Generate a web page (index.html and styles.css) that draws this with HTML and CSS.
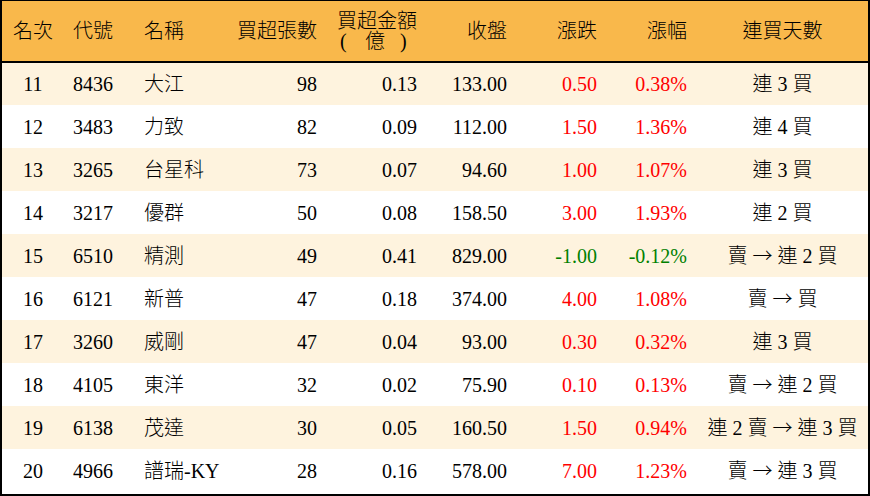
FILE: index.html
```html
<!DOCTYPE html>
<html lang="zh-Hant">
<head>
<meta charset="utf-8">
<title>買超排行</title>
<link rel="stylesheet" href="styles.css">
</head>
<body>
<div class="frame">
<table class="rank">
<colgroup>
<col class="w1"><col class="w2"><col class="w3"><col class="w4"><col class="w5"><col class="w6"><col class="w7"><col class="w8"><col class="w9">
</colgroup>
<thead>
<tr>
<th class="c">名次</th>
<th class="l">代號</th>
<th class="l">名稱</th>
<th class="r">買超張數</th>
<th class="r">買超金額<br><span class="pl">(</span>億<span class="pr">)</span></th>
<th class="r">收盤</th>
<th class="r">漲跌</th>
<th class="r">漲幅</th>
<th class="c">連買天數</th>
</tr>
</thead>
<tbody>
<tr><td class="c">11</td><td class="l">8436</td><td class="l">大江</td><td class="r">98</td><td class="r">0.13</td><td class="r">133.00</td><td class="r up">0.50</td><td class="r up">0.38%</td><td class="c">連 3 買</td></tr>
<tr><td class="c">12</td><td class="l">3483</td><td class="l">力致</td><td class="r">82</td><td class="r">0.09</td><td class="r">112.00</td><td class="r up">1.50</td><td class="r up">1.36%</td><td class="c">連 4 買</td></tr>
<tr><td class="c">13</td><td class="l">3265</td><td class="l">台星科</td><td class="r">73</td><td class="r">0.07</td><td class="r">94.60</td><td class="r up">1.00</td><td class="r up">1.07%</td><td class="c">連 3 買</td></tr>
<tr><td class="c">14</td><td class="l">3217</td><td class="l">優群</td><td class="r">50</td><td class="r">0.08</td><td class="r">158.50</td><td class="r up">3.00</td><td class="r up">1.93%</td><td class="c">連 2 買</td></tr>
<tr><td class="c">15</td><td class="l">6510</td><td class="l">精測</td><td class="r">49</td><td class="r">0.41</td><td class="r">829.00</td><td class="r down">-1.00</td><td class="r down">-0.12%</td><td class="c">賣 <span class="ar">→</span> 連 2 買</td></tr>
<tr><td class="c">16</td><td class="l">6121</td><td class="l">新普</td><td class="r">47</td><td class="r">0.18</td><td class="r">374.00</td><td class="r up">4.00</td><td class="r up">1.08%</td><td class="c">賣 <span class="ar">→</span> 買</td></tr>
<tr><td class="c">17</td><td class="l">3260</td><td class="l">威剛</td><td class="r">47</td><td class="r">0.04</td><td class="r">93.00</td><td class="r up">0.30</td><td class="r up">0.32%</td><td class="c">連 3 買</td></tr>
<tr><td class="c">18</td><td class="l">4105</td><td class="l">東洋</td><td class="r">32</td><td class="r">0.02</td><td class="r">75.90</td><td class="r up">0.10</td><td class="r up">0.13%</td><td class="c">賣 <span class="ar">→</span> 連 2 買</td></tr>
<tr><td class="c">19</td><td class="l">6138</td><td class="l">茂達</td><td class="r">30</td><td class="r">0.05</td><td class="r">160.50</td><td class="r up">1.50</td><td class="r up">0.94%</td><td class="c">連 2 賣 <span class="ar">→</span> 連 3 買</td></tr>
<tr><td class="c">20</td><td class="l">4966</td><td class="l">譜瑞-KY</td><td class="r">28</td><td class="r">0.16</td><td class="r">578.00</td><td class="r up">7.00</td><td class="r up">1.23%</td><td class="c">賣 <span class="ar">→</span> 連 3 買</td></tr>
</tbody>
</table>
</div>
</body>
</html>
```

FILE: styles.css
```css
html, body {
  margin: 0;
  padding: 0;
  background: #ffffff;
}
.frame {
  width: 870px;
  height: 496px;
  box-sizing: border-box;
  border-top: 1px solid #000;
  border-left: 2px solid #000;
  border-right: 2px solid #000;
  border-bottom: 2px solid #000;
  overflow: hidden;
}
.rank {
  width: 866px;
  border-collapse: collapse;
  table-layout: fixed;
  font-family: "Liberation Serif", "Noto Sans CJK TC", serif;
  font-size: 20px;
  font-weight: 300;
  color: #000;
}
.w1 { width: 62px; }
.w2 { width: 71px; }
.w3 { width: 90px; }
.w4 { width: 102px; }
.w5 { width: 100px; }
.w6 { width: 90px; }
.w7 { width: 90px; }
.w8 { width: 90px; }
.w9 { width: 171px; }
.rank thead tr {
  height: 61px;
  background: #f9b84b;
  border-bottom: 2px solid #000;
}
.rank th {
  font-weight: 300;
  line-height: 20px;
  padding: 0;
  white-space: nowrap;
}
.pl {
  display: inline-block;
  width: 25px;
  text-align: left;
}
.pr {
  display: inline-block;
  width: 32px;
  padding-left: 15px;
  box-sizing: border-box;
  text-align: left;
}
.rank tbody tr {
  height: 43px;
}
.rank tbody tr:nth-child(odd) {
  background: #fef3de;
}
.rank td {
  padding: 0;
  line-height: 22px;
  white-space: nowrap;
}
.c { text-align: center; }
.l { text-align: left; padding-left: 9px !important; }
.r { text-align: right; padding-right: 10px !important; }
.up { color: #ff0000; }
.down { color: #008000; }
.ar {
  font-family: "Noto Sans CJK JP", "Noto Sans CJK TC", sans-serif;
  font-weight: 300;
}
```
